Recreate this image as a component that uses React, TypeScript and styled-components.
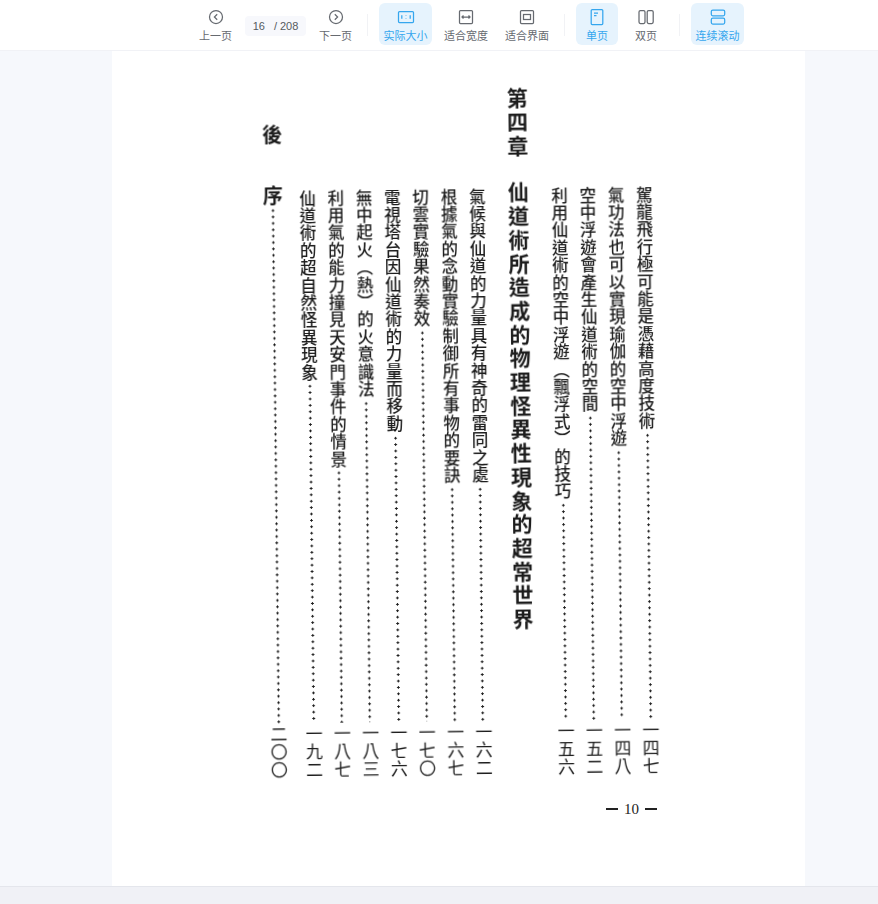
import React from "react";
import styled, { createGlobalStyle } from "styled-components";

const Global = createGlobalStyle`
  html, body { margin: 0; padding: 0; height: 100%; background: #f6f8fc; overflow: hidden; }
  #root { height: 100%; }
`;

const Shell = styled.div`
  height: 904px;
  display: flex;
  flex-direction: column;
  font-family: "Noto Sans CJK SC", "Liberation Sans", sans-serif;
`;

const Toolbar = styled.header`
  height: 51px;
  box-sizing: border-box;
  flex: none;
  background: #fff;
  border-bottom: 1px solid #f1f2f6;
  display: flex;
  align-items: flex-start;
  padding: 3px 0 0 194px;
  gap: 7px;
`;

const ToolButton = styled.button<{ $active?: boolean }>`
  all: unset;
  box-sizing: border-box;
  height: 42px;
  min-width: 42px;
  padding: 5px ${(p) => (p.$active ? "4.5px" : "5px")} 0;
  border-radius: 6px;
  display: flex;
  flex-direction: column;
  align-items: center;
  gap: 1px;
  background: ${(p) => (p.$active ? "#e6f3fd" : "transparent")};
  color: ${(p) => (p.$active ? "#35a6ee" : "#666a70")};
`;

const ToolLabel = styled.span`
  font-size: 11px;
  line-height: 16px;
  white-space: nowrap;
`;

const PageBox = styled.div`
  width: 61px;
  height: 20px;
  margin: 13px 1px 0;
  border-radius: 4px;
  background: #f7f8fc;
  color: #555a60;
  font-size: 11px;
  font-family: "Liberation Sans", sans-serif;
  display: flex;
  align-items: center;
  justify-content: center;
  gap: 9px;
`;

const Divider = styled.span<{ $wide?: boolean }>`
  width: 1px;
  height: 22px;
  margin: 11px 4px 0 ${(p) => (p.$wide ? "5px" : "3px")};
  background: #f1f2f5;
`;

const Main = styled.main`
  flex: 1;
  min-height: 0;
  padding-left: 112px;
`;

const Sheet = styled.section`
  width: 693px;
  height: 835px;
  box-sizing: border-box;
  background: #fff;
  padding: 35px 144px 0 0;
  display: flex;
  flex-direction: column;
  align-items: flex-end;
`;

const Scan = styled.div`
  display: flex;
  flex-direction: row-reverse;
  height: 689px;
  transform: rotate(-0.65deg);
  transform-origin: 100% 50%;
  color: #1c1c1c;
  font-family: "Noto Sans CJK TC", "Noto Sans CJK SC", sans-serif;
  filter: blur(0.2px);
`;

const Column = styled.div<{ $top?: number; $width?: number }>`
  width: ${(p) => p.$width ?? 28.3}px;
  padding-top: ${(p) => p.$top ?? 100}px;
  box-sizing: border-box;
  display: flex;
  flex-direction: column;
  align-items: center;
`;

const VerticalText = styled.span`
  writing-mode: vertical-rl;
  text-orientation: upright;
  white-space: nowrap;
  font-size: 16.5px;
  letter-spacing: 0.9px;
  line-height: 20px;
  font-weight: 500;
`;

const Leader = styled.span`
  flex: 1;
  width: 3px;
  margin: 2px 0 2px;
  background-image: radial-gradient(circle at center, #1c1c1c 1.1px, transparent 1.3px);
  background-size: 3px 6.4px;
  background-repeat: repeat-y;
`;

const Numerals = styled(VerticalText)`
  flex: none;
  height: 54px;
  font-size: 17px;
  letter-spacing: 1px;
  font-weight: 400;
`;

const TitleColumn = styled(Column)`
  gap: 22px;
`;

const ChapterNo = styled(VerticalText)`
  font-size: 21px;
  letter-spacing: 3px;
  font-weight: 700;
  line-height: 24px;
`;

const ChapterTitle = styled(VerticalText)`
  font-size: 21px;
  letter-spacing: 2.7px;
  font-weight: 700;
  line-height: 24px;
`;

const AfterwordChar = styled(VerticalText)`
  font-size: 20px;
  font-weight: 700;
  line-height: 24px;
  letter-spacing: 0;
  margin-bottom: 41px;
  &:nth-child(2) { margin-bottom: 0; }
`;

const Folio = styled.div`
  margin-top: 26px;
  margin-right: 4px;
  display: flex;
  align-items: center;
  gap: 6px;
  font-family: "Liberation Serif", serif;
  font-size: 15px;
  line-height: 16px;
  color: #222;
`;

const Dash = styled.span`
  width: 12px;
  height: 2px;
  background: #222;
`;

const StatusBar = styled.footer`
  height: 18px;
  box-sizing: border-box;
  flex: none;
  background: #f0f1f6;
  border-top: 1px solid #e4e6ec;
`;

type IconProps = { children: React.ReactNode };
const Icon = ({ children }: IconProps) => (
  <svg width="18" height="18" viewBox="0 0 18 18" fill="none" stroke="currentColor" strokeWidth="1.25">
    {children}
  </svg>
);

const entries = [
  ["駕龍飛行極可能是憑藉高度技術", "一四七"],
  ["氣功法也可以實現瑜伽的空中浮遊", "一四八"],
  ["空中浮遊會產生仙道術的空間", "一五二"],
  ["利用仙道術的空中浮遊（飄浮式）的技巧", "一五六"],
];
const entries2 = [
  ["氣候與仙道的力量具有神奇的雷同之處", "一六二"],
  ["根據氣的念動實驗制御所有事物的要訣", "一六七"],
  ["切雲實驗果然奏效", "一七〇"],
  ["電視塔台因仙道術的力量而移動", "一七六"],
  ["無中起火（熱）的火意識法", "一八三"],
  ["利用氣的能力撞見天安門事件的情景", "一八七"],
  ["仙道術的超自然怪異現象", "一九二"],
];

const Entry = ({ text, page }: { text: string; page: string }) => (
  <Column>
    <VerticalText>{text}</VerticalText>
    <Leader />
    <Numerals>{page}</Numerals>
  </Column>
);

export default function App() {
  return (
    <Shell>
      <Global />
      <Toolbar>
        <ToolButton>
          <Icon><circle cx="9" cy="9" r="6.5" /><path d="M10.2 6.2 7.4 9l2.8 2.8" /></Icon>
          <ToolLabel>上一页</ToolLabel>
        </ToolButton>
        <PageBox><span>16</span><span>/ 208</span></PageBox>
        <ToolButton>
          <Icon><circle cx="9" cy="9" r="6.5" /><path d="M7.8 6.2 10.6 9l-2.8 2.8" /></Icon>
          <ToolLabel>下一页</ToolLabel>
        </ToolButton>
        <Divider />
        <ToolButton $active>
          <Icon>
            <rect x="1.5" y="3.5" width="15" height="11" rx="1" />
            <path d="M4.8 7.2v3.6M9 7.5v.6M9 10v.6M13.2 7.2v3.6" />
          </Icon>
          <ToolLabel>实际大小</ToolLabel>
        </ToolButton>
        <ToolButton>
          <Icon>
            <rect x="2.5" y="2.5" width="13" height="13" rx="1" />
            <path d="M5 9h8M6.5 7.5 5 9l1.5 1.5M11.5 7.5 13 9l-1.5 1.5" />
          </Icon>
          <ToolLabel>适合宽度</ToolLabel>
        </ToolButton>
        <ToolButton>
          <Icon>
            <rect x="2.5" y="2.5" width="13" height="13" rx="1" />
            <rect x="5.5" y="6.5" width="7" height="5" />
          </Icon>
          <ToolLabel>适合界面</ToolLabel>
        </ToolButton>
        <Divider />
        <ToolButton $active>
          <Icon>
            <rect x="3.2" y="1.5" width="11.6" height="15" rx="1" />
            <path d="M6 5h4M6 7.5h2.5" />
          </Icon>
          <ToolLabel>单页</ToolLabel>
        </ToolButton>
        <ToolButton>
          <Icon>
            <rect x="2" y="2.5" width="6" height="13" rx="1.4" />
            <rect x="10.2" y="2.5" width="6" height="13" rx="1.4" />
          </Icon>
          <ToolLabel>双页</ToolLabel>
        </ToolButton>
        <Divider $wide />
        <ToolButton $active>
          <Icon>
            <rect x="2.3" y="2" width="13.4" height="5.8" rx="1.5" />
            <rect x="2.3" y="10.2" width="13.4" height="5.8" rx="1.5" />
          </Icon>
          <ToolLabel>连续滚动</ToolLabel>
        </ToolButton>
      </Toolbar>
      <Main>
        <Sheet lang="zh-TW">
          <Scan>
            {entries.map(([t, p]) => <Entry key={t} text={t} page={p} />)}
            <TitleColumn $top={0} $width={54}>
              <ChapterNo>第四章</ChapterNo>
              <ChapterTitle>仙道術所造成的物理怪異性現象的超常世界</ChapterTitle>
            </TitleColumn>
            {entries2.map(([t, p]) => <Entry key={t} text={t} page={p} />)}
            <Column $top={34} $width={42}>
              <AfterwordChar>後</AfterwordChar>
              <AfterwordChar>序</AfterwordChar>
              <Leader />
              <Numerals>二〇〇</Numerals>
            </Column>
          </Scan>
          <Folio><Dash />10<Dash /></Folio>
        </Sheet>
      </Main>
      <StatusBar />
    </Shell>
  );
}
